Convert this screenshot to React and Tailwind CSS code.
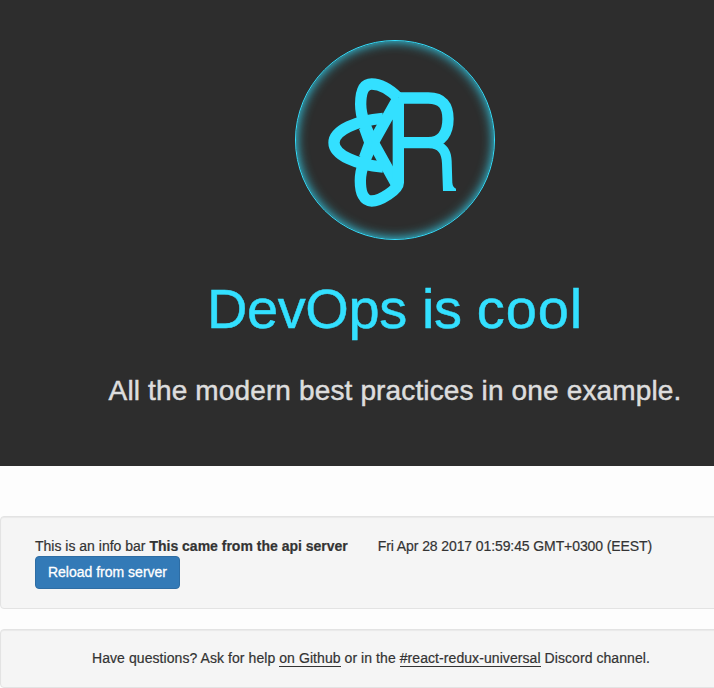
function Logo() {
  return (
    <div className="h-[200px] w-[200px] rounded-full border border-[#33e0ff] shadow-[inset_0_0_12px_#33e0ff]">
      <svg viewBox="18 18 594 594" className="block h-full w-full" fill="none" stroke="#33e0ff" strokeWidth="34">
        <path d="M320 449L254 331C226 281 212 246 212 208C212 170 222 147 245 147C268 147 298 162 325 189" />
        <path d="M320 197L254 315C226 365 211 400 211 437C211 474 222 498 245 498C270 498 325 464 325 443V189" />
        <path d="M279 250C200 256 132 286 132 323C132 360 200 390 279 396" />
        <path d="M207 282L222 323L207 364L233 364L247 323L233 282Z" fill="#33e0ff" stroke="none" />
        <path d="M325 189H415C457 189 474 212 474 252C474 292 456 323 415 323H325" />
        <path
          d="M415 306C440 306 450 315 457 323C475 335 484 350 485 378L487 443Q488 456 498 461V468H459L456 385C455 355 443 340 418 340Z"
          fill="#33e0ff"
          stroke="none"
        />
      </svg>
    </div>
  );
}

function Well({ className, children }) {
  return (
    <div className={`mb-5 rounded border border-[#e3e3e3] bg-[#f5f5f5] shadow-[inset_0_1px_1px_rgba(0,0,0,0.05)] ${className}`}>
      {children}
    </div>
  );
}

export default function App() {
  return (
    <div className="h-[688px] w-full overflow-hidden bg-[#fdfdfd] font-['Liberation_Sans',Arial,sans-serif] text-sm leading-5 text-[#333]">
      <div className="w-[790px]">
        <header className="mb-[50px] flex h-[466px] flex-col items-center bg-[#2d2d2d] pt-10">
          <Logo />
          <h1 className="mt-[38px] mb-px text-[56px] leading-[62px] whitespace-nowrap text-[#33e0ff] [-webkit-text-stroke:0.5px_#33e0ff]">
            <span className="tracking-[-0.4px]">DevOps is </span>
            <span className="tracking-[0.9px]">cool</span>
          </h1>
          <h2 className="mt-[34px] text-[28px] leading-8 tracking-[0.14px] whitespace-nowrap text-[#ddd] [-webkit-text-stroke:0.5px_#ddd]">
            All the modern best practices in one example.
          </h2>
        </header>
        <Well className="h-[93px] px-[34px] pt-[19px]">
          <div className="flex whitespace-nowrap [-webkit-text-stroke:0.2px_#333]">
            <span>This is an info bar&nbsp;</span>
            <strong className="font-bold">This came from the api server</strong>
            <span className="ml-[30px] tracking-[-0.1px]">Fri Apr 28 2017 01:59:45 GMT+0300 (EEST)</span>
          </div>
          <button className="flex h-[33px] w-[145px] items-center justify-center rounded border border-[#2e6da4] bg-[#337ab7] pb-0.5 whitespace-nowrap text-white [-webkit-text-stroke:0.3px_#fff]">
            Reload from server
          </button>
        </Well>
        <Well className="h-[59px] pt-[18px]">
          <p className="ml-[91px] tracking-[0.07px] whitespace-nowrap [-webkit-text-stroke:0.2px_#333]">
            Have questions? Ask for help <a className="border-b border-[#333]">on Github</a> or in the{" "}
            <a className="border-b border-[#333]">#react-redux-universal</a> Discord channel.
          </p>
        </Well>
      </div>
    </div>
  );
}
